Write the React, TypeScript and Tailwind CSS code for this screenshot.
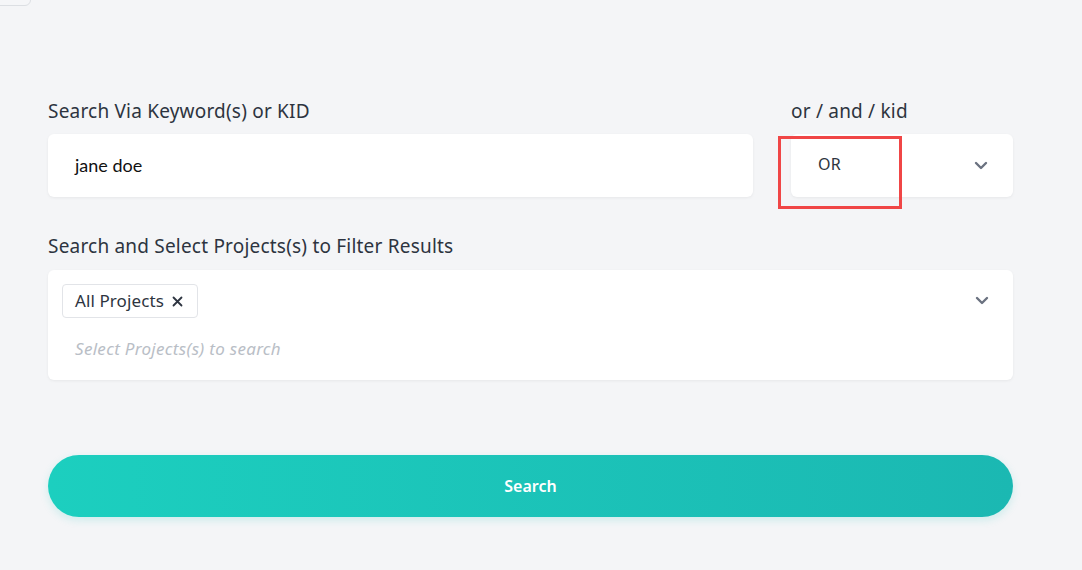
import React from "react";

function Chevron() {
  return (
    <svg width="14" height="9" viewBox="0 0 14 9" fill="none">
      <path d="M2 2l5 5 5-5" stroke="#6b7280" strokeWidth="2.4" strokeLinecap="round" strokeLinejoin="round" />
    </svg>
  );
}

export default function App() {
  const label = "font-['Noto_Sans',sans-serif] text-[19px] tracking-[0.2px] leading-[26px] text-[#2d3440]";
  return (
    <div className="relative min-h-[570px] w-full bg-[#f4f5f7] overflow-hidden">
      <div className="absolute -left-[4px] -top-[4px] w-[35px] h-[10px] border border-[#dcdfe3] rounded-br-[6px] bg-[#f5f6f8]" />
      <div className="pl-[48px] pt-[98px] w-[1013px]">
        <div className="flex gap-[38px]">
          <div className="flex-1">
            <div className={label + " mb-[10px]"}>Search Via Keyword(s) or KID</div>
            <div className="h-[63px] bg-white rounded-[6px] shadow-[0_1px_3px_rgba(0,0,0,0.06)] px-[27px] flex items-center font-['Lato',sans-serif] text-[18px] text-[#111]">
              jane doe
            </div>
          </div>
          <div className="w-[222px]">
            <div className={label + " mb-[10px]"}>or / and / kid</div>
            <div className="relative">
              <div className="h-[63px] bg-white rounded-[6px] shadow-[0_1px_3px_rgba(0,0,0,0.06)] pl-[27px] pr-[25px] flex items-center justify-between">
                <span className="font-['Noto_Sans',sans-serif] text-[16px] tracking-[0.3px] text-[#2d3440] -mt-[3px]">OR</span>
                <Chevron />
              </div>
              <div className="absolute -left-[13px] top-[2px] w-[124px] h-[73px] border-[3px] border-[#f04646]" />
            </div>
          </div>
        </div>
        <div className={label + " mt-[36px] mb-[11px]"}>Search and Select Projects(s) to Filter Results</div>
        <div className="h-[110px] bg-white rounded-[6px] shadow-[0_1px_3px_rgba(0,0,0,0.06)] pl-[14px] pr-[24px] pt-[14px] flex justify-between">
          <div className="flex flex-col">
            <div className="h-[34px] w-[136px] border border-[#e2e4e8] rounded-[4px] flex items-center pl-[12px] gap-[8px] font-['Noto_Sans',sans-serif] text-[17px] tracking-[0.1px] text-[#2d3440]">
              <span>All Projects</span>
              <svg width="11" height="11" viewBox="0 0 11 11"><path d="M1.5 1.5l8 8M9.5 1.5l-8 8" stroke="#2d3440" strokeWidth="1.8" strokeLinecap="round" /></svg>
            </div>
            <div className="mt-[20px] pl-[13px] font-['Noto_Sans',sans-serif] italic text-[17px] tracking-[0.3px] leading-[22px] text-[#b9bec6]">
              Select Projects(s) to search
            </div>
          </div>
          <div className="pt-[12px]"><Chevron /></div>
        </div>
        <button className="mt-[75px] w-full h-[62px] rounded-full bg-gradient-to-r from-[#1ccfbf] to-[#1bb8b2] shadow-[0_3px_8px_rgba(28,200,190,0.18)] text-white font-['Noto_Sans',sans-serif] font-semibold text-[16px]">
          Search
        </button>
      </div>
    </div>
  );
}
